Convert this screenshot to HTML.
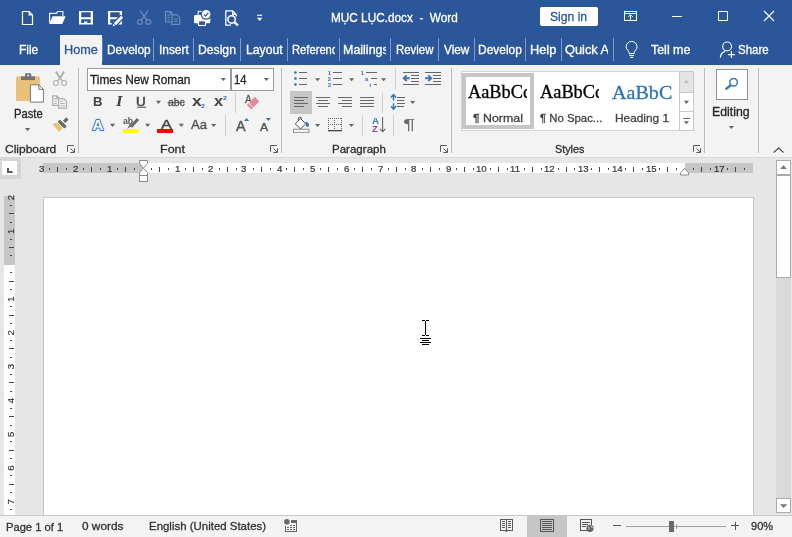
<!DOCTYPE html>
<html lang="en"><head><meta charset="utf-8"><title>MỤC LỤC.docx - Word</title>
<style>
html,body{margin:0;padding:0}
body{width:792px;height:537px;overflow:hidden;position:relative;background:#e6e6e6;font-family:"Liberation Sans",sans-serif;font-size:12.5px}
div,span,svg{box-sizing:border-box}
.a{position:absolute}
.t{position:absolute;white-space:pre;transform-origin:0 50%}
.clip{position:absolute;overflow:hidden}
.txt{left:0;top:0;width:792px;height:537px;will-change:transform}
.titlebar{left:0;top:0;width:792px;height:65px;background:#2b579a}
.hometab{left:60px;top:35px;width:42px;height:30px;background:#f3f3f3}
.tsep{top:38px;width:1px;height:23px;background:#7c9ccb}
.signin{left:540px;top:7px;width:58px;height:19px;background:#fff;border-radius:2px}
.ribbon{left:0;top:65px;width:792px;height:93px;background:#f3f3f3;border-bottom:1px solid #dadada}
.gsep{top:68px;width:1px;height:85px;background:#bdbdbd}
.ssep{width:1px;background:#d2d2d2}
.combo{top:68px;height:23px;background:#fff;border:1px solid #9a9a9a}
.sel{background:#c6c6c6}
.gallery{left:461px;top:71px;width:233px;height:60px;background:#fff;border:1px solid #d4d4d4}
.stylesel{left:462px;top:73px;width:72px;height:56px;border:4px solid #c6c6c6;background:#fff}
.gbtn{left:679px;width:15px;border:1px solid #c8c8c8;background:#fff}
.editbox{left:716px;top:69px;width:32px;height:31px;background:#fff;border:1px solid #8e8e8e}
.tabsel{left:0;top:158px;width:21px;height:21px;background:#d6d6d6}
.tabsel i{position:absolute;left:2px;top:3px;width:15px;height:14px;background:#fff;display:block}
.hruler{left:43px;top:163px;width:710px;height:10px;background:#fff}
.hruler .m{position:absolute;top:0;height:10px;background:#c6c6c6}
.vruler{left:4px;top:196px;width:11px;height:319px;background:#fff}
.vruler .m{position:absolute;left:0;top:0;width:11px;height:69px;background:#c6c6c6}
.page{left:43px;top:197px;width:711px;height:330px;background:#fff;border:1px solid #c6c6c6}
.sbtrack{left:776px;top:160px;width:15px;height:353px;background:#dadada}
.sbbtn{left:776px;width:15px;background:#fff;border:1px solid #ababab}
.status{left:0;top:515px;width:792px;height:22px;background:#f3f3f3;border-top:1px solid #c8c8c8}
.icons{left:0;top:0}
</style></head>
<body>
<div class="a titlebar"></div>
<div class="a hometab"></div>
<div class="a tsep" style="left:153px"></div>
<div class="a tsep" style="left:193px"></div>
<div class="a tsep" style="left:240px"></div>
<div class="a tsep" style="left:287px"></div>
<div class="a tsep" style="left:339px"></div>
<div class="a tsep" style="left:390px"></div>
<div class="a tsep" style="left:438px"></div>
<div class="a tsep" style="left:474px"></div>
<div class="a tsep" style="left:525px"></div>
<div class="a tsep" style="left:561px"></div>
<div class="a tsep" style="left:613px"></div>
<div class="a tsep" style="left:102px;background:#5a7fb6"></div>
<div class="a signin"></div>
<div class="a ribbon"></div>
<div class="a gsep" style="left:78px"></div>
<div class="a gsep" style="left:281px"></div>
<div class="a gsep" style="left:451px"></div>
<div class="a gsep" style="left:704px"></div>
<div class="a gsep" style="left:758px"></div>
<div class="a ssep" style="left:235px;top:92px;height:21px"></div>
<div class="a ssep" style="left:225px;top:115px;height:21px"></div>
<div class="a ssep" style="left:395px;top:68px;height:22px"></div>
<div class="a ssep" style="left:382px;top:92px;height:21px"></div>
<div class="a ssep" style="left:362px;top:115px;height:21px"></div>
<div class="a ssep" style="left:393px;top:115px;height:21px"></div>
<div class="a combo" style="left:87px;width:144px"></div>
<div class="a combo" style="left:231px;width:43px"></div>
<div class="a sel" style="left:290px;top:91px;width:22px;height:23px"></div>
<div class="a gallery"></div><div class="a stylesel"></div>
<div class="a gbtn" style="top:71px;height:22px;background:#e4e4e4"></div>
<div class="a gbtn" style="top:92px;height:20px"></div>
<div class="a gbtn" style="top:111px;height:20px"></div>
<div class="a editbox"></div>
<div class="a tabsel"><i></i></div>
<div class="a hruler"><div class="m" style="left:0;width:100px"></div><div class="m" style="left:642px;width:68px"></div></div>
<div class="a vruler"><div class="m"></div></div>
<div class="a page"></div>
<div class="a sbtrack"></div>
<div class="a sbbtn" style="top:160px;height:15px"></div>
<div class="a sbbtn" style="top:175px;height:103px"></div>
<div class="a sbbtn" style="top:498px;height:15px"></div>
<div class="a status"></div>
<div class="a sel" style="left:527px;top:516px;width:40px;height:21px"></div>
<div class="a txt">
<span class="t" style="left:331.00px;top:9.95px;font-size:12.6px;line-height:16px;color:#ffffff;transform:scaleX(0.9356);-webkit-text-stroke:0.3px #ffffff;">MỤC LỤC.docx  -  Word</span>
<span class="t" style="left:550.00px;top:8.95px;font-size:12.6px;line-height:16px;color:#2b579a;transform:scaleX(0.9624);-webkit-text-stroke:0.3px #2b579a;">Sign in</span>
<span class="t" style="left:18.50px;top:41.95px;font-size:12.6px;line-height:16px;color:#ffffff;transform:scaleX(0.9425);-webkit-text-stroke:0.3px #ffffff;">File</span>
<span class="t" style="left:63.78px;top:41.95px;font-size:12.6px;line-height:16px;color:#2b579a;transform:scaleX(1.0090);-webkit-text-stroke:0.3px #2b579a;">Home</span>
<span class="t" style="left:107.00px;top:41.95px;font-size:12.6px;line-height:16px;color:#ffffff;transform:scaleX(0.9446);-webkit-text-stroke:0.3px #ffffff;">Develop</span>
<span class="t" style="left:158.53px;top:41.95px;font-size:12.6px;line-height:16px;color:#ffffff;transform:scaleX(0.9431);-webkit-text-stroke:0.3px #ffffff;">Insert</span>
<span class="t" style="left:198.00px;top:41.95px;font-size:12.6px;line-height:16px;color:#ffffff;transform:scaleX(0.9671);-webkit-text-stroke:0.3px #ffffff;">Design</span>
<span class="t" style="left:245.50px;top:41.95px;font-size:12.6px;line-height:16px;color:#ffffff;transform:scaleX(0.9710);-webkit-text-stroke:0.3px #ffffff;">Layout</span>
<div class="clip" style="left:0;top:0;width:335.0px;height:537px"><span class="t" style="left:291.50px;top:41.95px;font-size:12.6px;line-height:16px;color:#ffffff;transform:scaleX(0.8895);-webkit-text-stroke:0.3px #ffffff;">References</span></div>
<div class="clip" style="left:0;top:0;width:386.2px;height:537px"><span class="t" style="left:342.89px;top:41.95px;font-size:12.6px;line-height:16px;color:#ffffff;transform:scaleX(0.9904);-webkit-text-stroke:0.3px #ffffff;">Mailings</span></div>
<span class="t" style="left:395.50px;top:41.95px;font-size:12.6px;line-height:16px;color:#ffffff;transform:scaleX(0.9048);-webkit-text-stroke:0.3px #ffffff;">Review</span>
<span class="t" style="left:443.95px;top:41.95px;font-size:12.6px;line-height:16px;color:#ffffff;transform:scaleX(0.9341);-webkit-text-stroke:0.3px #ffffff;">View</span>
<span class="t" style="left:478.00px;top:41.95px;font-size:12.6px;line-height:16px;color:#ffffff;transform:scaleX(0.9488);-webkit-text-stroke:0.3px #ffffff;">Develop</span>
<span class="t" style="left:529.73px;top:41.95px;font-size:12.6px;line-height:16px;color:#ffffff;transform:scaleX(1.0132);-webkit-text-stroke:0.3px #ffffff;">Help</span>
<div class="clip" style="left:0;top:0;width:608.3px;height:537px"><span class="t" style="left:564.87px;top:41.95px;font-size:12.6px;line-height:16px;color:#ffffff;transform:scaleX(1.0178);-webkit-text-stroke:0.3px #ffffff;">Quick Ac</span></div>
<span class="t" style="left:651.34px;top:41.95px;font-size:12.6px;line-height:16px;color:#ffffff;transform:scaleX(0.9862);-webkit-text-stroke:0.3px #ffffff;">Tell me</span>
<span class="t" style="left:738.31px;top:41.95px;font-size:12.6px;line-height:16px;color:#ffffff;transform:scaleX(0.9106);-webkit-text-stroke:0.3px #ffffff;">Share</span>
<span class="t" style="left:14.00px;top:105.95px;font-size:12.6px;line-height:16px;color:#262626;transform:scaleX(0.8904);-webkit-text-stroke:0.3px #262626;">Paste</span>
<span class="t" style="left:4.87px;top:142.02px;font-size:11.3px;line-height:15px;color:#2e2e2e;transform:scaleX(1.0607);-webkit-text-stroke:0.3px #2e2e2e;">Clipboard</span>
<span class="t" style="left:159.97px;top:142.02px;font-size:11.3px;line-height:15px;color:#2e2e2e;transform:scaleX(1.1051);-webkit-text-stroke:0.3px #2e2e2e;">Font</span>
<span class="t" style="left:331.50px;top:142.02px;font-size:11.3px;line-height:15px;color:#2e2e2e;transform:scaleX(1.0212);-webkit-text-stroke:0.3px #2e2e2e;">Paragraph</span>
<span class="t" style="left:554.63px;top:142.02px;font-size:11.3px;line-height:15px;color:#2e2e2e;transform:scaleX(0.9535);-webkit-text-stroke:0.3px #2e2e2e;">Styles</span>
<span class="t" style="left:712.45px;top:103.95px;font-size:12.6px;line-height:16px;color:#262626;transform:scaleX(0.9770);-webkit-text-stroke:0.3px #262626;">Editing</span>
<span class="t" style="left:90.39px;top:71.95px;font-size:12.6px;line-height:16px;color:#1e1e1e;transform:scaleX(0.9420);-webkit-text-stroke:0.3px #1e1e1e;">Times New Roman</span>
<span class="t" style="left:234.00px;top:71.95px;font-size:12.6px;line-height:16px;color:#1e1e1e;transform:scaleX(0.8844);-webkit-text-stroke:0.3px #1e1e1e;">14</span>
<span class="t" style="left:93.00px;top:93.95px;font-size:12.6px;line-height:16px;color:#444;transform:scaleX(1.0471);font-weight:700;">B</span>
<span class="t" style="left:116.33px;top:92.97px;font-size:13.6px;line-height:17px;color:#444;transform:scaleX(1.2331);font-family:'Liberation Serif',serif;font-weight:700;font-style:italic;">I</span>
<span class="t" style="left:136.31px;top:93.95px;font-size:12.6px;line-height:16px;color:#444;transform:scaleX(1.0647);-webkit-text-stroke:0.5px #444;">U</span>
<span class="t" style="left:167.50px;top:94.97px;font-size:11.8px;line-height:15px;color:#555;transform:scaleX(0.8825);-webkit-text-stroke:0.35px #555;">abc</span>
<span class="t" style="left:191.91px;top:91.96px;font-size:14px;line-height:18px;color:#444;transform:scaleX(1.2469);font-weight:700;">x</span>
<span class="t" style="left:200.65px;top:101.98px;font-size:6px;line-height:9px;color:#3572ba;transform:scaleX(1.1724);font-weight:700;">2</span>
<span class="t" style="left:213.53px;top:91.96px;font-size:14px;line-height:18px;color:#444;transform:scaleX(1.1699);font-weight:700;">x</span>
<span class="t" style="left:222.65px;top:93.98px;font-size:6px;line-height:9px;color:#3572ba;transform:scaleX(1.1724);font-weight:700;">2</span>
<span class="t" style="left:245.18px;top:92.01px;font-size:10.6px;line-height:14px;color:#555;transform:scaleX(0.9339);-webkit-text-stroke:0.3px #555;">A</span>
<span class="t" style="left:160.75px;top:116.04px;font-size:13.4px;line-height:17px;color:#444;transform:scaleX(1.2217);-webkit-text-stroke:0.45px #444;">A</span>
<span class="t" style="left:190.98px;top:116.95px;font-size:12.6px;line-height:16px;color:#555;transform:scaleX(1.0357);-webkit-text-stroke:0.4px #555;">Aa</span>
<span class="t" style="left:236.00px;top:116.96px;font-size:14px;line-height:18px;color:#555;transform:scaleX(1.0273);-webkit-text-stroke:0.4px #555;">A</span>
<span class="t" style="left:259.53px;top:120.06px;font-size:11.2px;line-height:15px;color:#555;transform:scaleX(1.0862);-webkit-text-stroke:0.4px #555;">A</span>
<span class="t" style="left:123.23px;top:114.96px;font-size:8.6px;line-height:12px;color:#555;transform:scaleX(1.0118);font-weight:700;">ab</span>
<span class="t" style="left:371.68px;top:114.04px;font-size:9.8px;line-height:13px;color:#3a76b8;transform:scaleX(0.9949);font-weight:700;">A</span>
<span class="t" style="left:371.79px;top:122.04px;font-size:9.8px;line-height:13px;color:#8e44ad;transform:scaleX(0.9672);font-weight:700;">Z</span>
<span class="t" style="left:403.43px;top:114.97px;font-size:14.7px;line-height:18px;color:#6a6a6a;transform:scaleX(1.5684);">¶</span>
<div class="clip" style="left:0;top:0;width:527.1px;height:537px"><span class="t" style="left:468.34px;top:81.01px;font-size:18.3px;line-height:22px;color:#000;transform:scaleX(1.0017);font-family:'Liberation Serif',serif;-webkit-text-stroke:0.3px #000;">AaBbCc</span></div>
<div class="clip" style="left:0;top:0;width:598.6px;height:537px"><span class="t" style="left:539.84px;top:81.01px;font-size:18.3px;line-height:22px;color:#000;transform:scaleX(1.0031);font-family:'Liberation Serif',serif;-webkit-text-stroke:0.3px #000;">AaBbCc</span></div>
<div class="clip" style="left:0;top:0;width:671.8px;height:537px"><span class="t" style="left:611.80px;top:80.13px;font-size:19.8px;line-height:24px;color:#2e74b5;transform:scaleX(1.0161);font-family:'Liberation Serif',serif;-webkit-text-stroke:0.3px #2e74b5;">AaBbCc</span></div>
<span class="t" style="left:472.95px;top:111.02px;font-size:11.3px;line-height:15px;color:#444;transform:scaleX(1.0936);-webkit-text-stroke:0.3px #444;">¶ Normal</span>
<span class="t" style="left:539.97px;top:111.02px;font-size:11.3px;line-height:15px;color:#444;transform:scaleX(1.0058);-webkit-text-stroke:0.3px #444;">¶ No Spac...</span>
<span class="t" style="left:615.00px;top:111.02px;font-size:11.3px;line-height:15px;color:#444;transform:scaleX(1.0496);-webkit-text-stroke:0.3px #444;">Heading 1</span>
<span class="t" style="left:6.00px;top:520.02px;font-size:11.3px;line-height:15px;color:#333;transform:scaleX(0.9883);-webkit-text-stroke:0.3px #333;">Page 1 of 1</span>
<span class="t" style="left:82.44px;top:519.02px;font-size:11.3px;line-height:15px;color:#333;transform:scaleX(1.0467);-webkit-text-stroke:0.3px #333;">0 words</span>
<span class="t" style="left:149.00px;top:519.02px;font-size:11.3px;line-height:15px;color:#333;transform:scaleX(1.0133);-webkit-text-stroke:0.3px #333;">English (United States)</span>
<span class="t" style="left:750.76px;top:519.02px;font-size:11.3px;line-height:15px;color:#333;transform:scaleX(0.9751);-webkit-text-stroke:0.3px #333;">90%</span>
<span class="t" style="left:39.09px;top:162.04px;font-size:9.8px;line-height:13px;color:#333;transform:scaleX(0.9800);-webkit-text-stroke:0.2px #333;">3</span>
<span class="t" style="left:73.05px;top:162.04px;font-size:9.8px;line-height:13px;color:#333;transform:scaleX(0.9800);-webkit-text-stroke:0.2px #333;">2</span>
<span class="t" style="left:107.43px;top:162.04px;font-size:9.8px;line-height:13px;color:#333;transform:scaleX(0.9800);-webkit-text-stroke:0.2px #333;">1</span>
<span class="t" style="left:174.67px;top:162.04px;font-size:9.8px;line-height:13px;color:#333;transform:scaleX(0.9800);-webkit-text-stroke:0.2px #333;">1</span>
<span class="t" style="left:208.33px;top:162.04px;font-size:9.8px;line-height:13px;color:#333;transform:scaleX(0.9800);-webkit-text-stroke:0.2px #333;">2</span>
<span class="t" style="left:241.41px;top:162.04px;font-size:9.8px;line-height:13px;color:#333;transform:scaleX(0.9800);-webkit-text-stroke:0.2px #333;">3</span>
<span class="t" style="left:276.59px;top:162.04px;font-size:9.8px;line-height:13px;color:#333;transform:scaleX(0.9800);-webkit-text-stroke:0.2px #333;">4</span>
<span class="t" style="left:309.71px;top:162.04px;font-size:9.8px;line-height:13px;color:#333;transform:scaleX(0.9800);-webkit-text-stroke:0.2px #333;">5</span>
<span class="t" style="left:344.16px;top:162.04px;font-size:9.8px;line-height:13px;color:#333;transform:scaleX(0.9800);-webkit-text-stroke:0.2px #333;">6</span>
<span class="t" style="left:377.52px;top:162.04px;font-size:9.8px;line-height:13px;color:#333;transform:scaleX(0.9800);-webkit-text-stroke:0.2px #333;">7</span>
<span class="t" style="left:411.20px;top:162.04px;font-size:9.8px;line-height:13px;color:#333;transform:scaleX(0.9800);-webkit-text-stroke:0.2px #333;">8</span>
<span class="t" style="left:445.71px;top:162.04px;font-size:9.8px;line-height:13px;color:#333;transform:scaleX(0.9800);-webkit-text-stroke:0.2px #333;">9</span>
<span class="t" style="left:476.38px;top:162.04px;font-size:9.8px;line-height:13px;color:#333;transform:scaleX(0.9800);-webkit-text-stroke:0.2px #333;">10</span>
<span class="t" style="left:510.44px;top:162.04px;font-size:9.8px;line-height:13px;color:#333;transform:scaleX(0.9800);-webkit-text-stroke:0.2px #333;">11</span>
<span class="t" style="left:544.39px;top:162.04px;font-size:9.8px;line-height:13px;color:#333;transform:scaleX(0.9800);-webkit-text-stroke:0.2px #333;">12</span>
<span class="t" style="left:577.91px;top:162.04px;font-size:9.8px;line-height:13px;color:#333;transform:scaleX(0.9800);-webkit-text-stroke:0.2px #333;">13</span>
<span class="t" style="left:611.67px;top:162.04px;font-size:9.8px;line-height:13px;color:#333;transform:scaleX(0.9800);-webkit-text-stroke:0.2px #333;">14</span>
<span class="t" style="left:645.90px;top:162.04px;font-size:9.8px;line-height:13px;color:#333;transform:scaleX(0.9800);-webkit-text-stroke:0.2px #333;">15</span>
<span class="t" style="left:713.83px;top:162.04px;font-size:9.8px;line-height:13px;color:#333;transform:scaleX(0.9800);-webkit-text-stroke:0.2px #333;">17</span>
</div>
<svg class="a icons" width="792" height="537" viewBox="0 0 792 537">
<!-- ===== Quick access toolbar ===== -->
<g fill="none" stroke="#fff" stroke-width="1.1">
  <path d="M22.5 11.500h6.600l3.400 3.400v9.600h-10z M29.100 11.500v3.400h3.400" stroke-width="1.200"/>
  <path d="M49.6 22.6v-9.2h6.8l1.3-1.9h5.2v4.6"/>
</g>
<path d="M49.2 24l3.4-7.7h13l-3.3 7.7z" fill="#fff"/>
<path fill="#fff" fill-rule="evenodd" d="M79 11h14v13.6H79z M81.2 12.3v4.9h9.5v-4.9z M81.2 19.300v3.800h2.800v-1.700h3.300v1.700h3.400v-3.800z"/>
<path fill="#fff" fill-rule="evenodd" d="M108 11h14v13.6h-14z M110.2 12.3v4.9h9.5v-4.9z M110.2 19.3v3.8h2.8v-1.7h3.3v1.7h3.4v-3.8z"/>
<path d="M113.2 25.9l9.3-9.5" stroke="#2b579a" stroke-width="5.6" fill="none"/>
<path d="M114.9 24.2l7.2-7.4" stroke="#fff" stroke-width="2.8" fill="none"/>
<path d="M112.6 26.3l0.8-2.6 1.9 1.8z" fill="#fff"/>
<g fill="none" stroke="#6d8cc0" stroke-width="1.2">
  <path d="M140.2 10.6l6.6 9.6 M148 10.6l-6.6 9.6"/>
  <circle cx="139.9" cy="22" r="2.4"/><circle cx="148.3" cy="22" r="2.4"/>
  <path d="M171.4 22h-5.9V11.6h5l2.2 2.2 M170.3 11.6v2.4h2.4"/>
  <path d="M171.9 14.8h5l2.9 2.9v6.7h-7.9z"/>
  <path d="M167.3 15h2.6M167.3 17.4h2.6M167.3 19.8h2.6M173.8 19h4M173.8 21.4h4" stroke-width="1"/>
</g>
<rect x="198.2" y="11.4" width="5.5" height="4.5" fill="none" stroke="#fff" stroke-width="1.1"/>
<rect x="194" y="15" width="16.3" height="8.2" rx="1.2" fill="#fff"/>
<rect x="198.5" y="20.8" width="7" height="4.7" fill="#2b579a" stroke="#fff" stroke-width="1.1"/>
<circle cx="206.1" cy="14.3" r="5.5" fill="#2b579a"/><circle cx="206.1" cy="14.3" r="4.3" fill="#fff"/>
<path d="M203.9 14.4l1.6 1.7 2.9-3.5" fill="none" stroke="#2b579a" stroke-width="1.2"/>
<path d="M231 25.200h-5.200V10.900h6.900l3.500 3.500v2.200 M232.700 10.900v3.500h3.500" fill="none" stroke="#fff" stroke-width="1.300"/>
<circle cx="231.600" cy="19.400" r="3.700" fill="#2b579a" stroke="#fff" stroke-width="1.600"/>
<path d="M234.4 22.3l3.6 3.1" stroke="#fff" stroke-width="2.2" fill="none"/>
<rect x="257.2" y="14.7" width="4.9" height="1.2" fill="#fff"/><path d="M256.8 17.7h5.7l-2.85 3.2z" fill="#fff"/>
<!-- window controls -->
<g fill="none" stroke="#fff" stroke-width="1">
  <rect x="624.5" y="11.5" width="12" height="9"/><path d="M624.5 13.5h12 M630.5 19.8v-4.6 M628.3 16.9l2.2-2.2 2.2 2.2"/>
  <rect x="718.5" y="11.5" width="9" height="9"/>
  <path d="M764 11l10 10M774 11l-10 10" stroke-width="1.1"/>
</g>
<rect x="672" y="16" width="10" height="1" fill="#fff"/>
<!-- bulb + share -->
<g fill="none" stroke="#fff" stroke-width="1">
  <path d="M629 53.6v-1c0-2-2.9-3-2.9-5.7a5.5 5.5 0 0 1 11 0c0 2.7-2.9 3.700-2.900 5.700v1z"/>
  <path d="M629.300 55.600h4.700M630.300 57.500h2.700"/>
  <circle cx="727.100" cy="46.400" r="4.400" stroke-width="1.1"/>
  <path d="M720.300 57.800c.3-3.500 2.300-5.700 4.900-6.400 M727.900 54.600h7M731.400 51.100v7" stroke-width="1.100"/>
</g>
<!-- ===== Clipboard group ===== -->
<rect x="16" y="76.200" width="24" height="24.800" rx="1.600" fill="#eac17a"/>
<rect x="25" y="73.200" width="6.200" height="4" rx="1" fill="#737373"/><rect x="21" y="76.400" width="14" height="3.700" fill="#737373"/>
<circle cx="28.100" cy="75.400" r=".9" fill="#f3f3f3"/>
<path d="M30.400 84.800h8.400l4.600 4.600v12.700h-13z" fill="#fff" stroke="#777" stroke-width="1"/><path d="M38.800 84.800v4.600h4.600" fill="none" stroke="#777"/>
<g fill="none" stroke="#b0b0b0" stroke-width="1.300">
  <path d="M55.900 71.500l3.900 6.500 M64 71.500l-3.900 6.500" stroke-width="2.100"/>
  <path d="M59.800 78l2.800 3 M60.100 78l-2.800 3" stroke-width="1.300"/>
  <circle cx="55.900" cy="83" r="2.500" stroke-width="1.100"/><circle cx="64.100" cy="83" r="2.500" stroke-width="1.100"/>
  <path d="M58.200 105.300h-5.500v-9.500h4.200l2.200 2.200 M56.700 95.800v2.400h2.400"/>
  <path d="M58.600 98.600h5l2.900 2.900v6.700h-7.900z"/>
  <path d="M54.300 98.500h2.500M54.300 101h2.500M54.300 103.500h2.500M60.400 103.500h4.400M60.400 105.700h4.400M60.400 101.300h2.300" stroke-width="1.100"/>
</g>
<path d="M67.400 118.500l-3.300 3.300" stroke="#6a6a6a" stroke-width="3.200" fill="none"/>
<path d="M59.700 121.700l4.900 4.700" stroke="#6a6a6a" stroke-width="3.400" stroke-linecap="round" fill="none"/>
<path d="M52.300 124.100l4.600-1.600 6 5.600-3.700 3.800z" fill="#eac17a"/>
<!-- dropdown arrows -->
<g fill="#666">
<path d="M25.0 128.1h5.2l-2.60 3.1z"/>
<path d="M220.7 78.0h5.2l-2.60 3.1z"/>
<path d="M263.8 78.0h5.2l-2.60 3.1z"/>
<path d="M155.9 100.8h5.2l-2.60 3.1z"/>
<path d="M109.9 123.8h5.2l-2.60 3.1z"/>
<path d="M145.0 123.8h5.2l-2.60 3.1z"/>
<path d="M178.7 123.8h5.2l-2.60 3.1z"/>
<path d="M211.1 123.9h5.2l-2.60 3.1z"/>
<path d="M315.0 78.2h5.2l-2.60 3.1z"/>
<path d="M349.0 78.2h5.2l-2.60 3.1z"/>
<path d="M381.0 78.2h5.2l-2.60 3.1z"/>
<path d="M410.0 100.9h5.2l-2.60 3.1z"/>
<path d="M315.0 123.9h5.2l-2.60 3.1z"/>
<path d="M348.8 123.9h5.2l-2.60 3.1z"/>
<path d="M728.8 125.9h5.2l-2.60 3.1z"/>
<path d="M683.8 100.8h5.2l-2.60 3.1z"/>
<path d="M683.8 121.2h5.2l-2.60 3.1z"/>
<rect x="683" y="118" width="7" height="1" shape-rendering="crispEdges"/>
</g>
<path d="M683.900 83h5.200l-2.600-3.100z" fill="#bdbdbd"/>
<!-- ===== Font group ===== -->
<rect x="137" y="106.700" width="9" height="1" fill="#444"/>
<rect x="167.500" y="102.200" width="17.300" height="1" fill="#555"/>
<g font-family="Liberation Sans, sans-serif" font-weight="700" font-size="15.200" text-anchor="middle" stroke-linejoin="round">
  <text x="97.900" y="130" fill="none" stroke="#cfe0f5" stroke-width="3.600">A</text>
  <text x="97.900" y="130" fill="none" stroke="#3a76c4" stroke-width="1.900">A</text>
  <text x="97.900" y="130" fill="#fff">A</text>
</g>
<path d="M138 119l-7 7.700" stroke="#6a6a6a" stroke-width="3" fill="none"/><path d="M132.200 125.600l-2.200-2-2.900 5.300z" fill="#6a6a6a"/>
<rect x="123" y="129" width="16" height="4" fill="#ffff00"/>
<rect x="157" y="129" width="16" height="4" fill="#ff0000"/>
<path d="M254.900 96.800l4.400 4.600-8 8-4.500-4.500z" fill="#e8899e"/><path d="M248.600 103.100l4.500 4.500" stroke="#f3f3f3" stroke-width=".9"/>
<path d="M244 121.100l2.600-3.100 2.600 3.100z" fill="#3572ba"/><path d="M265.800 118h5.200l-2.600 3.100z" fill="#3572ba"/>
<!-- ===== Paragraph group ===== -->
<g fill="#3572ba"><circle cx="295.400" cy="72.500" r="1.350"/><circle cx="295.400" cy="78.500" r="1.350"/><circle cx="295.400" cy="84.500" r="1.350"/></g>
<g fill="#666" shape-rendering="crispEdges">
  <rect x="299" y="72" width="8" height="1"/><rect x="299" y="78" width="8" height="1"/><rect x="299" y="84" width="8" height="1"/>
  <rect x="333" y="72" width="9" height="1"/><rect x="333" y="78" width="9" height="1"/><rect x="333" y="84" width="9" height="1"/>
  <rect x="366" y="72" width="11" height="1"/><rect x="371" y="78" width="6" height="1"/><rect x="374" y="84" width="3" height="1"/>
  <rect x="403" y="72" width="16" height="1"/><rect x="411" y="75" width="8" height="1"/><rect x="411" y="78" width="8" height="1"/><rect x="411" y="81" width="8" height="1"/><rect x="403" y="84" width="16" height="1"/>
  <rect x="425" y="72" width="16" height="1"/><rect x="433" y="75" width="8" height="1"/><rect x="433" y="78" width="8" height="1"/><rect x="433" y="81" width="8" height="1"/><rect x="425" y="84" width="16" height="1"/>
  <rect x="294" y="97" width="14" height="1"/><rect x="294" y="100" width="10" height="1"/><rect x="294" y="103" width="14" height="1"/><rect x="294" y="106" width="10" height="1"/>
  <rect x="316" y="97" width="14" height="1"/><rect x="318" y="100" width="10" height="1"/><rect x="316" y="103" width="14" height="1"/><rect x="318" y="106" width="10" height="1"/>
  <rect x="338" y="97" width="14" height="1"/><rect x="342" y="100" width="10" height="1"/><rect x="338" y="103" width="14" height="1"/><rect x="342" y="106" width="10" height="1"/>
  <rect x="360" y="97" width="14" height="1"/><rect x="360" y="100" width="14" height="1"/><rect x="360" y="103" width="14" height="1"/><rect x="360" y="106" width="14" height="1"/>
  <rect x="397" y="97" width="8" height="1"/><rect x="397" y="100" width="7" height="1"/><rect x="397" y="103" width="8" height="1"/><rect x="397" y="106" width="7" height="1"/>
</g>
<g font-family="Liberation Sans, sans-serif" font-weight="700" font-size="5.800" fill="#3572ba" text-anchor="middle">
  <text x="329.400" y="74.600">1</text><text x="329.400" y="80.700">2</text><text x="329.400" y="86.700">3</text>
  <text x="362.400" y="74.600">1</text><text x="366.500" y="80.700">a</text><text x="370.400" y="86.700">i</text>
</g>
<g fill="none" stroke="#3572ba" stroke-width="1.300">
  <path d="M409.800 78.200h-5.600 M406.700 75.300l-2.900 2.900 2.900 2.900" stroke="#3a76b8" stroke-width="1.900"/>
  <path d="M425.200 78.200h5.600 M428.300 75.300l2.900 2.900-2.900 2.900" stroke="#3a76b8" stroke-width="1.900"/>
  <path d="M393.500 94.800v5.800 M390.900 97.600l2.600-2.900 2.600 2.900 M393.500 103.200v5.800 M390.900 106.200l2.600 2.900 2.600-2.900" stroke="#3a76b8" stroke-width="1.500"/>
</g>
<!-- shading -->
<path d="M300.500 118.600l5.200 5.200-5.200 5.200-5.200-5.200z" fill="#fff" stroke="#4a4a4a" stroke-width="1"/>
<path d="M298.300 121v-2.200a1.600 1.600 0 0 1 3.200 0v1" fill="none" stroke="#4a4a4a" stroke-width="1"/>
<path d="M305.400 121.600c2.200.3 3.600 1.700 3.600 3.300 0 1.100-.8 2-1.700 2s-1.600-.8-1.300-2.200z" fill="#3572ba"/>
<rect x="293.500" y="129.300" width="15.500" height="3" fill="#fff" stroke="#8a8a8a" stroke-width="1"/>
<!-- borders -->
<g stroke="#666" stroke-width="1" stroke-dasharray="1 1" fill="none" shape-rendering="crispEdges">
  <path d="M328.500 118v12M334.500 118v12M341.500 118v12M328 118.500h14M328 124.500h14"/>
</g>
<rect x="328" y="130" width="14" height="1.300" fill="#444"/>
<!-- sort arrow -->
<path d="M382.600 117.100v14.200 M379.900 128.800l2.700 2.800 2.700-2.800" fill="none" stroke="#666" stroke-width="1.100"/>
<!-- launchers -->
<g fill="none" stroke="#5a5a5a" stroke-width="1">
  <path d="M67.5 151.800v-6.300h6.400 M70.4 148.400l3.800 3.800 M74.5 148.300v4.200h-4.200"/>
  <path d="M270.5 151.800v-6.300h6.400 M273.4 148.400l3.800 3.800 M277.5 148.300v4.200h-4.200"/>
  <path d="M440.5 151.800v-6.300h6.400 M443.4 148.400l3.800 3.800 M447.5 148.300v4.200h-4.200"/>
  <path d="M693.5 151.800v-6.300h6.400 M696.4 148.400l3.800 3.800 M700.5 148.300v4.200h-4.200"/>
</g>
<!-- editing magnifier -->
<circle cx="733.600" cy="82.200" r="3.800" fill="none" stroke="#3e78b5" stroke-width="1.500"/><path d="M730.800 85.200l-5.200 4" stroke="#3e78b5" stroke-width="2.400" fill="none"/>
<path d="M773.700 152.500l4.900-4.500 4.900 4.500" fill="none" stroke="#4a4a4a" stroke-width="1.100"/>
<!-- ===== ruler markers ===== -->
<path d="M8 168v4h4.600" fill="none" stroke="#5a5a5a" stroke-width="2"/>
<g fill="#fff" stroke="#8a8a8a" stroke-width="1">
  <path d="M139.500 160.500h8v3l-4 4.700-4-4.700z"/>
  <path d="M143.500 168.400l4 4.300v2.800h-8v-2.800z"/>
  <rect x="139.500" y="175.500" width="8" height="6"/>
  <path d="M684.500 168.400l4 4.300v2.300h-8v-2.300z"/>
</g>
<path d="M780.200 169h6.600l-3.300-3.800z" fill="#777"/><path d="M779.900 504.200h7.400l-3.700 3.800z" fill="#777"/>
<!-- ===== status bar ===== -->
<circle cx="286.900" cy="521.800" r="2.800" fill="#6a6a6a"/>
<g fill="#666" shape-rendering="crispEdges">
  <rect x="291" y="520" width="6" height="3"/><rect x="296" y="520" width="1" height="12"/><rect x="285" y="531" width="12" height="1"/><rect x="285" y="526" width="1" height="6"/>
  <rect x="290" y="525" width="2" height="1"/><rect x="293" y="525" width="2" height="1"/>
  <rect x="287" y="527" width="2" height="1"/><rect x="290" y="527" width="2" height="1"/><rect x="293" y="527" width="2" height="1"/>
  <rect x="287" y="529" width="2" height="1"/><rect x="290" y="529" width="2" height="1"/><rect x="293" y="529" width="2" height="1"/>
</g>
<g fill="none" stroke="#5a5a5a" stroke-width="1" shape-rendering="crispEdges">
  <path d="M500.500 519.500h12v10.500h-12z M506.500 519.500v12"/>
  <path d="M502 521.500h3M502 523.500h3M502 525.500h3M502 527.500h3M508 521.500h3M508 523.500h3M508 525.500h3M508 527.500h3"/>
</g>
<path d="M504.800 530.200l1.700 1.700 1.700-1.700" fill="none" stroke="#5a5a5a" stroke-width="1"/>
<g fill="none" stroke="#555" stroke-width="1" shape-rendering="crispEdges">
  <rect x="540.500" y="519.500" width="13" height="12" stroke-width="1.300"/>
  <path d="M542 521.500h10M542 523.500h10M542 525.500h10M542 527.500h10M542 529.500h10"/>
  <path d="M589 530.500h-8.500v-11h11v5"/><path d="M582 522.500h8M582 524.500h6M582 526.500h4"/>
</g>
<circle cx="590" cy="528.300" r="3.600" fill="#666"/><path d="M588 526.600c1 .6 1.400 1.600.8 2.800M591.200 525.600c-.6 1 .2 1.900 1.500 2" fill="none" stroke="#f3f3f3" stroke-width=".8"/>
<g fill="#555" shape-rendering="crispEdges">
  <rect x="613" y="525" width="8" height="1"/>
  <rect x="731" y="525" width="8" height="1"/><rect x="734.500" y="521.500" width="1" height="8"/>
</g>
<rect x="626" y="526" width="100" height="1" fill="#a0a0a0" shape-rendering="crispEdges"/>
<rect x="676" y="524" width="1" height="5" fill="#a0a0a0" shape-rendering="crispEdges"/>
<rect x="669" y="521" width="5" height="11" fill="#6a6a6a" shape-rendering="crispEdges"/>
<!-- I-beam cursor -->
<g fill="#000" shape-rendering="crispEdges">
  <rect x="422" y="320" width="3" height="1"/><rect x="426" y="320" width="3" height="1"/><rect x="425" y="321" width="1" height="14"/>
  <rect x="422" y="335" width="3" height="1"/><rect x="426" y="335" width="3" height="1"/>
  <rect x="420" y="338" width="11" height="1"/><rect x="422" y="340" width="7" height="1"/><rect x="420" y="342" width="11" height="1"/><rect x="422" y="344" width="7" height="1"/>
</g>

<g fill="#444" shape-rendering="crispEdges">
<rect x="49" y="168" width="1" height="2"/>
<rect x="57" y="167" width="1" height="5"/>
<rect x="66" y="168" width="1" height="2"/>
<rect x="83" y="168" width="1" height="2"/>
<rect x="91" y="167" width="1" height="5"/>
<rect x="100" y="168" width="1" height="2"/>
<rect x="117" y="168" width="1" height="2"/>
<rect x="125" y="167" width="1" height="5"/>
<rect x="134" y="168" width="1" height="2"/>
<rect x="151" y="168" width="1" height="2"/>
<rect x="159" y="167" width="1" height="5"/>
<rect x="168" y="168" width="1" height="2"/>
<rect x="185" y="168" width="1" height="2"/>
<rect x="193" y="167" width="1" height="5"/>
<rect x="202" y="168" width="1" height="2"/>
<rect x="219" y="168" width="1" height="2"/>
<rect x="227" y="167" width="1" height="5"/>
<rect x="236" y="168" width="1" height="2"/>
<rect x="253" y="168" width="1" height="2"/>
<rect x="261" y="167" width="1" height="5"/>
<rect x="270" y="168" width="1" height="2"/>
<rect x="286" y="168" width="1" height="2"/>
<rect x="294" y="167" width="1" height="5"/>
<rect x="303" y="168" width="1" height="2"/>
<rect x="320" y="168" width="1" height="2"/>
<rect x="328" y="167" width="1" height="5"/>
<rect x="337" y="168" width="1" height="2"/>
<rect x="354" y="168" width="1" height="2"/>
<rect x="362" y="167" width="1" height="5"/>
<rect x="371" y="168" width="1" height="2"/>
<rect x="388" y="168" width="1" height="2"/>
<rect x="396" y="167" width="1" height="5"/>
<rect x="405" y="168" width="1" height="2"/>
<rect x="422" y="168" width="1" height="2"/>
<rect x="430" y="167" width="1" height="5"/>
<rect x="439" y="168" width="1" height="2"/>
<rect x="456" y="168" width="1" height="2"/>
<rect x="464" y="167" width="1" height="5"/>
<rect x="473" y="168" width="1" height="2"/>
<rect x="490" y="168" width="1" height="2"/>
<rect x="498" y="167" width="1" height="5"/>
<rect x="507" y="168" width="1" height="2"/>
<rect x="524" y="168" width="1" height="2"/>
<rect x="532" y="167" width="1" height="5"/>
<rect x="541" y="168" width="1" height="2"/>
<rect x="558" y="168" width="1" height="2"/>
<rect x="566" y="167" width="1" height="5"/>
<rect x="574" y="168" width="1" height="2"/>
<rect x="591" y="168" width="1" height="2"/>
<rect x="599" y="167" width="1" height="5"/>
<rect x="608" y="168" width="1" height="2"/>
<rect x="625" y="168" width="1" height="2"/>
<rect x="633" y="167" width="1" height="5"/>
<rect x="642" y="168" width="1" height="2"/>
<rect x="659" y="168" width="1" height="2"/>
<rect x="667" y="167" width="1" height="5"/>
<rect x="676" y="168" width="1" height="2"/>
<rect x="693" y="168" width="1" height="2"/>
<rect x="701" y="167" width="1" height="5"/>
<rect x="710" y="168" width="1" height="2"/>
<rect x="727" y="168" width="1" height="2"/>
<rect x="735" y="167" width="1" height="5"/>
<rect x="744" y="168" width="1" height="2"/>
<rect x="10" y="205" width="2" height="1"/>
<rect x="9" y="213" width="5" height="1"/>
<rect x="10" y="222" width="2" height="1"/>
<rect x="10" y="239" width="2" height="1"/>
<rect x="9" y="247" width="5" height="1"/>
<rect x="10" y="255" width="2" height="1"/>
<rect x="10" y="272" width="2" height="1"/>
<rect x="9" y="281" width="5" height="1"/>
<rect x="10" y="289" width="2" height="1"/>
<rect x="10" y="306" width="2" height="1"/>
<rect x="9" y="315" width="5" height="1"/>
<rect x="10" y="323" width="2" height="1"/>
<rect x="10" y="340" width="2" height="1"/>
<rect x="9" y="348" width="5" height="1"/>
<rect x="10" y="357" width="2" height="1"/>
<rect x="10" y="374" width="2" height="1"/>
<rect x="9" y="382" width="5" height="1"/>
<rect x="10" y="391" width="2" height="1"/>
<rect x="10" y="408" width="2" height="1"/>
<rect x="9" y="416" width="5" height="1"/>
<rect x="10" y="425" width="2" height="1"/>
<rect x="10" y="441" width="2" height="1"/>
<rect x="9" y="450" width="5" height="1"/>
<rect x="10" y="458" width="2" height="1"/>
<rect x="10" y="475" width="2" height="1"/>
<rect x="9" y="484" width="5" height="1"/>
<rect x="10" y="492" width="2" height="1"/>
<rect x="10" y="509" width="2" height="1"/>
</g>
<g font-family="Liberation Sans, sans-serif" font-size="9.800" fill="#333" stroke="#333" stroke-width=".2" text-anchor="middle">
<text transform="translate(14.1 197.56) rotate(-90) scale(.98 1)">2</text>
<text transform="translate(14.1 231.38) rotate(-90) scale(.98 1)">1</text>
<text transform="translate(14.1 299.02) rotate(-90) scale(.98 1)">1</text>
<text transform="translate(14.1 332.84) rotate(-90) scale(.98 1)">2</text>
<text transform="translate(14.1 366.66) rotate(-90) scale(.98 1)">3</text>
<text transform="translate(14.1 400.47999999999996) rotate(-90) scale(.98 1)">4</text>
<text transform="translate(14.1 434.3) rotate(-90) scale(.98 1)">5</text>
<text transform="translate(14.1 468.12) rotate(-90) scale(.98 1)">6</text>
<text transform="translate(14.1 501.94) rotate(-90) scale(.98 1)">7</text>
</g>
</svg>
</body></html>
